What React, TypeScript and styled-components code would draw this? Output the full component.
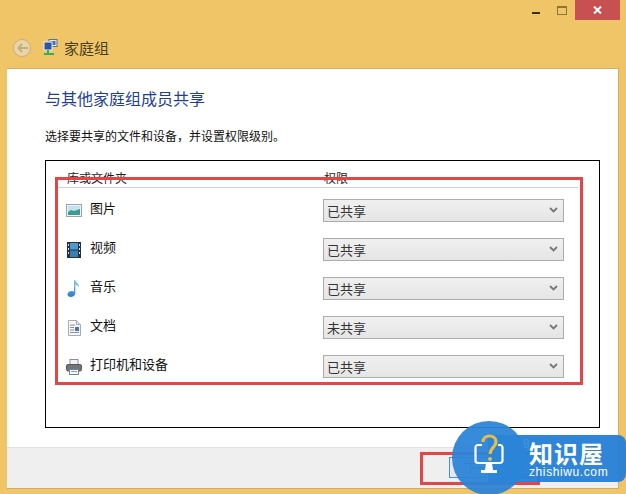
import styled, { createGlobalStyle } from "styled-components";

const Global = createGlobalStyle`
  html, body { margin: 0; padding: 0; }
  body { width: 626px; height: 494px; overflow: hidden; font-family: "Noto Sans CJK SC", "Liberation Sans", sans-serif; }
`;

const Window = styled.div`
  position: relative;
  width: 626px;
  height: 494px;
  box-sizing: border-box;
  background: #efc568;
  display: flex;
  flex-direction: column;
  padding: 0 7px 5px 7px;
  overflow: hidden;
`;

const TitleBar = styled.div`
  height: 20px;
  display: flex;
  justify-content: flex-end;
  margin-right: -1px;
`;

const WinButton = styled.div<{ $close?: boolean; $w: number }>`
  width: ${(p) => p.$w}px;
  height: 20px;
  display: flex;
  align-items: center;
  justify-content: center;
  background: ${(p) => (p.$close ? "#c75050" : "transparent")};
`;

const MinGlyph = styled.div`
  width: 8px;
  height: 2px;
  background: #3a3010;
  margin-top: 6px;
`;

const MaxGlyph = styled.div`
  width: 8px;
  height: 6px;
  border: 1px solid #8f7535;
  border-top-width: 2px;
`;

const NavBar = styled.div`
  height: 48px;
  box-sizing: border-box;
  padding: 19px 0 0 6px;
  display: flex;
  align-items: flex-start;
  gap: 6px;
`;

const BackButton = styled.div`
  width: 18px;
  height: 18px;
  box-sizing: border-box;
  border-radius: 50%;
  border: 1px solid #c9ad78;
  background: #e9d6a8;
  display: flex;
  align-items: center;
  justify-content: center;
  margin-right: 6px;
`;

const NavTitle = styled.span`
  font-size: 15px;
  line-height: 18px;
  color: #4a3d1e;
`;

const Panel = styled.div`
  flex: 1;
  display: flex;
  flex-direction: column;
  border: 1px solid #cdae6c;
  border-left: 0;
  background: #fff;
`;

const Content = styled.div`
  flex: 1;
  box-sizing: border-box;
  padding: 18px 19px 0 38px;
`;

const Heading = styled.h1`
  margin: 0;
  font-size: 16px;
  line-height: 22px;
  font-weight: 400;
  color: #1f3f96;
`;

const Intro = styled.p`
  margin: 19px 0 0;
  font-size: 12px;
  line-height: 16px;
  color: #111;
`;

const ShareBox = styled.div`
  margin-top: 16px;
  width: 555px;
  height: 268px;
  box-sizing: border-box;
  border: 1px solid #000;
  padding: 8px 21px 0 10px;
`;

const HeaderRow = styled.div`
  display: grid;
  grid-template-columns: 257px 1fr;
  padding: 1px 0 0 11px;
  height: 17px;
  font-size: 12px;
  line-height: 16px;
  color: #222;
  border-bottom: 1px solid #cfcfcf;
`;

const Rows = styled.div`
  display: flex;
  flex-direction: column;
  gap: 16px;
  padding-top: 11px;
`;

const Row = styled.div`
  display: grid;
  grid-template-columns: 24px 233px 241px;
  align-items: center;
  height: 23px;
  padding-left: 10px;
`;

const IconSlot = styled.div`
  width: 16px;
  height: 16px;
  display: flex;
  align-items: center;
  justify-content: center;
`;

const RowLabel = styled.span`
  font-size: 13px;
  line-height: 16px;
  color: #111;
  margin-top: -5px;
`;

const Select = styled.div`
  height: 23px;
  box-sizing: border-box;
  border: 1px solid #acacac;
  background: linear-gradient(#f0f0f0, #e5e5e5);
  display: flex;
  align-items: center;
  justify-content: space-between;
  padding: 0 5px 1px 3px;
  font-size: 13px;
  color: #333;
`;

const Footer = styled.div`
  height: 41px;
  box-sizing: border-box;
  background: #efefef;
  border-top: 1px solid #dfdfdf;
  display: flex;
  justify-content: flex-end;
  padding: 9px 85px 0 0;
`;

const NextButton = styled.div`
  width: 84px;
  height: 21px;
  box-sizing: border-box;
  border: 1px solid #3f90e0;
  background: #e8e8e8;
  display: flex;
  align-items: center;
  justify-content: center;
  font-size: 12px;
  color: #666;
`;

const RedFrame = styled.div<{ $x: number; $y: number; $w: number; $h: number }>`
  position: absolute;
  left: ${(p) => p.$x}px;
  top: ${(p) => p.$y}px;
  width: ${(p) => p.$w}px;
  height: ${(p) => p.$h}px;
  box-sizing: border-box;
  border: 3px solid #e64545;
`;

const Badge = styled.div`
  position: absolute;
  left: 452px;
  top: 421px;
  width: 174px;
  height: 73px;
`;

const BadgeBar = styled.div`
  position: absolute;
  left: 36px;
  top: 14px;
  width: 138px;
  height: 47px;
  border-radius: 0 8px 8px 0;
  background: rgba(36, 128, 214, 0.95);
  color: #fff;
  box-sizing: border-box;
  padding-left: 41px;
`;

const BadgeCircle = styled.div`
  position: absolute;
  left: 0;
  top: 0;
  width: 74px;
  height: 74px;
  border-radius: 50%;
  background: rgba(42, 132, 216, 0.94);
  display: flex;
  align-items: center;
  justify-content: center;
`;

const BadgeName = styled.div`
  font-size: 24px;
  line-height: 27px;
  font-weight: 700;
  letter-spacing: 1px;
  margin-top: 4px;
`;

const BadgeUrl = styled.div`
  font-family: "Liberation Sans", sans-serif;
  font-size: 12px;
  line-height: 13px;
  letter-spacing: 0.6px;
`;

const BadgeGhost = styled.span`
  position: absolute;
  left: 14px;
  top: 2px;
  font-family: "Liberation Sans", sans-serif;
  font-size: 12px;
  line-height: 14px;
  color: #4394dd;
`;

const LogoWrap = styled.div`
  margin-top: -9px;
  display: flex;
`;

const PictureIcon = () => (
  <svg width="16" height="13" viewBox="0 0 16 13">
    <rect x="0.5" y="0.5" width="15" height="12" fill="#eef0f2" stroke="#9aa4ab" />
    <rect x="2" y="2" width="12" height="9" fill="#c3e4ec" />
    <path d="M2 8l3-2 3 1 6-2v6H2z" fill="#3a9a94" />
  </svg>
);

const VideoIcon = () => (
  <svg width="14" height="16" viewBox="0 0 14 16">
    <rect width="14" height="16" fill="#24323c" />
    <rect x="3" y="1" width="8" height="6.5" fill="#4a9ad0" />
    <rect x="3" y="8.5" width="8" height="6.5" fill="#3a7fb4" />
    <path d="M1 2h1v2H1zM1 6h1v2H1zM1 10h1v2H1zM12 2h1v2h-1zM12 6h1v2h-1zM12 10h1v2h-1z" fill="#dfe6ea" />
  </svg>
);

const MusicIcon = () => (
  <svg width="14" height="17" viewBox="0 0 14 18">
    <defs>
      <linearGradient id="note" x1="0" y1="0" x2="0" y2="1">
        <stop offset="0" stopColor="#8cc4ec" />
        <stop offset="1" stopColor="#2a80d2" />
      </linearGradient>
    </defs>
    <path d="M7 0h1.400c.4 3 4.600 4 4 8-.6-2-2.600-3-4-3.200V14c0 2.400-2.400 4-5 4C1.400 18 0 16.800 0 15.200 0 13 2.400 11.600 4.600 11.600c1 0 1.800.2 2.400.6z" fill="url(#note)" />
  </svg>
);

const DocIcon = () => (
  <svg width="13" height="16" viewBox="0 0 13 16">
    <path d="M.5.5h8l4 4v11H.500z" fill="#f6f7f9" stroke="#a4abb3" />
    <path d="M8.500.5v4h4" fill="#dfe3e8" stroke="#a4abb3" />
    <path d="M2 5h5M2 7.500h4M2 10h4M2 12.500h9" stroke="#8a929b" strokeWidth="1" />
    <rect x="7" y="7" width="4" height="4" fill="#4a76a8" />
  </svg>
);

const PrinterIcon = () => (
  <svg width="16" height="16" viewBox="0 0 16 16">
    <rect x="4" y="0.500" width="8" height="6" fill="#f3f3f3" stroke="#8b8f93" />
    <rect x="0.500" y="5.500" width="15" height="6.500" rx="1.500" fill="#6f757a" stroke="#54595d" />
    <rect x="3.500" y="10.500" width="9" height="5" fill="#fafafa" stroke="#7d8286" />
    <rect x="5" y="12" width="6" height="1" fill="#6ea5d4" />
  </svg>
);

const HomegroupIcon = () => (
  <svg width="15" height="16" viewBox="0 0 15 16">
    <rect x="6" y="0.500" width="8" height="7" fill="#dfe6ee" stroke="#68707c" />
    <rect x="7.500" y="2" width="5" height="4" fill="#4a6fb4" />
    <rect x="1" y="3" width="8" height="8" fill="#2a55a8" stroke="#e9eef4" />
    <path d="M5 11v3M1 15h10" stroke="#2db35c" strokeWidth="2" />
  </svg>
);

const Chevron = () => (
  <svg width="9" height="6" viewBox="0 0 9 6">
    <path d="M1 1l3.500 3.500L8 1" fill="none" stroke="#777" strokeWidth="1.800" />
  </svg>
);

const BadgeLogo = () => (
  <svg width="30" height="40" viewBox="0 0 30 40">
    <path d="M8 11H4a2.500 2.500 0 0 0-2.500 2.500v13A2.500 2.500 0 0 0 4 29h22a2.500 2.500 0 0 0 2.500-2.500v-13A2.500 2.500 0 0 0 26 11h-2" fill="none" stroke="#fff" strokeWidth="2.200" />
    <path d="M12 29h6l1 7h4v3H7v-3h4z" fill="#fff" />
    <path d="M9 8c0-8 13-8 13 0 0 5-6 6-6 12" fill="none" stroke="#e5bd4a" strokeWidth="3.200" />
    <circle cx="16" cy="25" r="2" fill="#e5bd4a" />
  </svg>
);

const rows = [
  { label: "图片", value: "已共享", icon: <PictureIcon /> },
  { label: "视频", value: "已共享", icon: <VideoIcon /> },
  { label: "音乐", value: "已共享", icon: <MusicIcon /> },
  { label: "文档", value: "未共享", icon: <DocIcon /> },
  { label: "打印机和设备", value: "已共享", icon: <PrinterIcon /> },
];

export default function App() {
  return (
    <Window>
      <Global />
      <TitleBar>
        <WinButton $w={27}>
          <MinGlyph />
        </WinButton>
        <WinButton $w={26}>
          <MaxGlyph />
        </WinButton>
        <WinButton $w={45} $close>
          <svg width="9" height="8" viewBox="0 0 9 8">
            <path d="M1 .5l7 7M8 .5l-7 7" stroke="#fff" strokeWidth="2" />
          </svg>
        </WinButton>
      </TitleBar>
      <NavBar>
        <BackButton>
          <svg width="11" height="10" viewBox="0 0 11 10">
            <path d="M5 1L1.500 5 5 9M2 5h9" fill="none" stroke="#c4ac80" strokeWidth="2" />
          </svg>
        </BackButton>
        <HomegroupIcon />
        <NavTitle>家庭组</NavTitle>
      </NavBar>
      <Panel>
        <Content>
          <Heading>与其他家庭组成员共享</Heading>
          <Intro>选择要共享的文件和设备，并设置权限级别。</Intro>
          <ShareBox>
            <HeaderRow>
              <span>库或文件夹</span>
              <span>权限</span>
            </HeaderRow>
            <Rows>
              {rows.map((r) => (
                <Row key={r.label}>
                  <IconSlot>{r.icon}</IconSlot>
                  <RowLabel>{r.label}</RowLabel>
                  <Select>
                    {r.value}
                    <Chevron />
                  </Select>
                </Row>
              ))}
            </Rows>
          </ShareBox>
        </Content>
        <Footer>
          <NextButton>下一步(N)</NextButton>
        </Footer>
      </Panel>
      <RedFrame $x={55} $y={177} $w={528} $h={208} />
      <RedFrame $x={420} $y={452} $w={120} $h={33} />
      <Badge>
        <BadgeBar>
          <BadgeGhost>Win8</BadgeGhost>
          <BadgeName>知识屋</BadgeName>
          <BadgeUrl>zhishiwu.com</BadgeUrl>
        </BadgeBar>
        <BadgeCircle>
          <LogoWrap>
            <BadgeLogo />
          </LogoWrap>
        </BadgeCircle>
      </Badge>
    </Window>
  );
}
